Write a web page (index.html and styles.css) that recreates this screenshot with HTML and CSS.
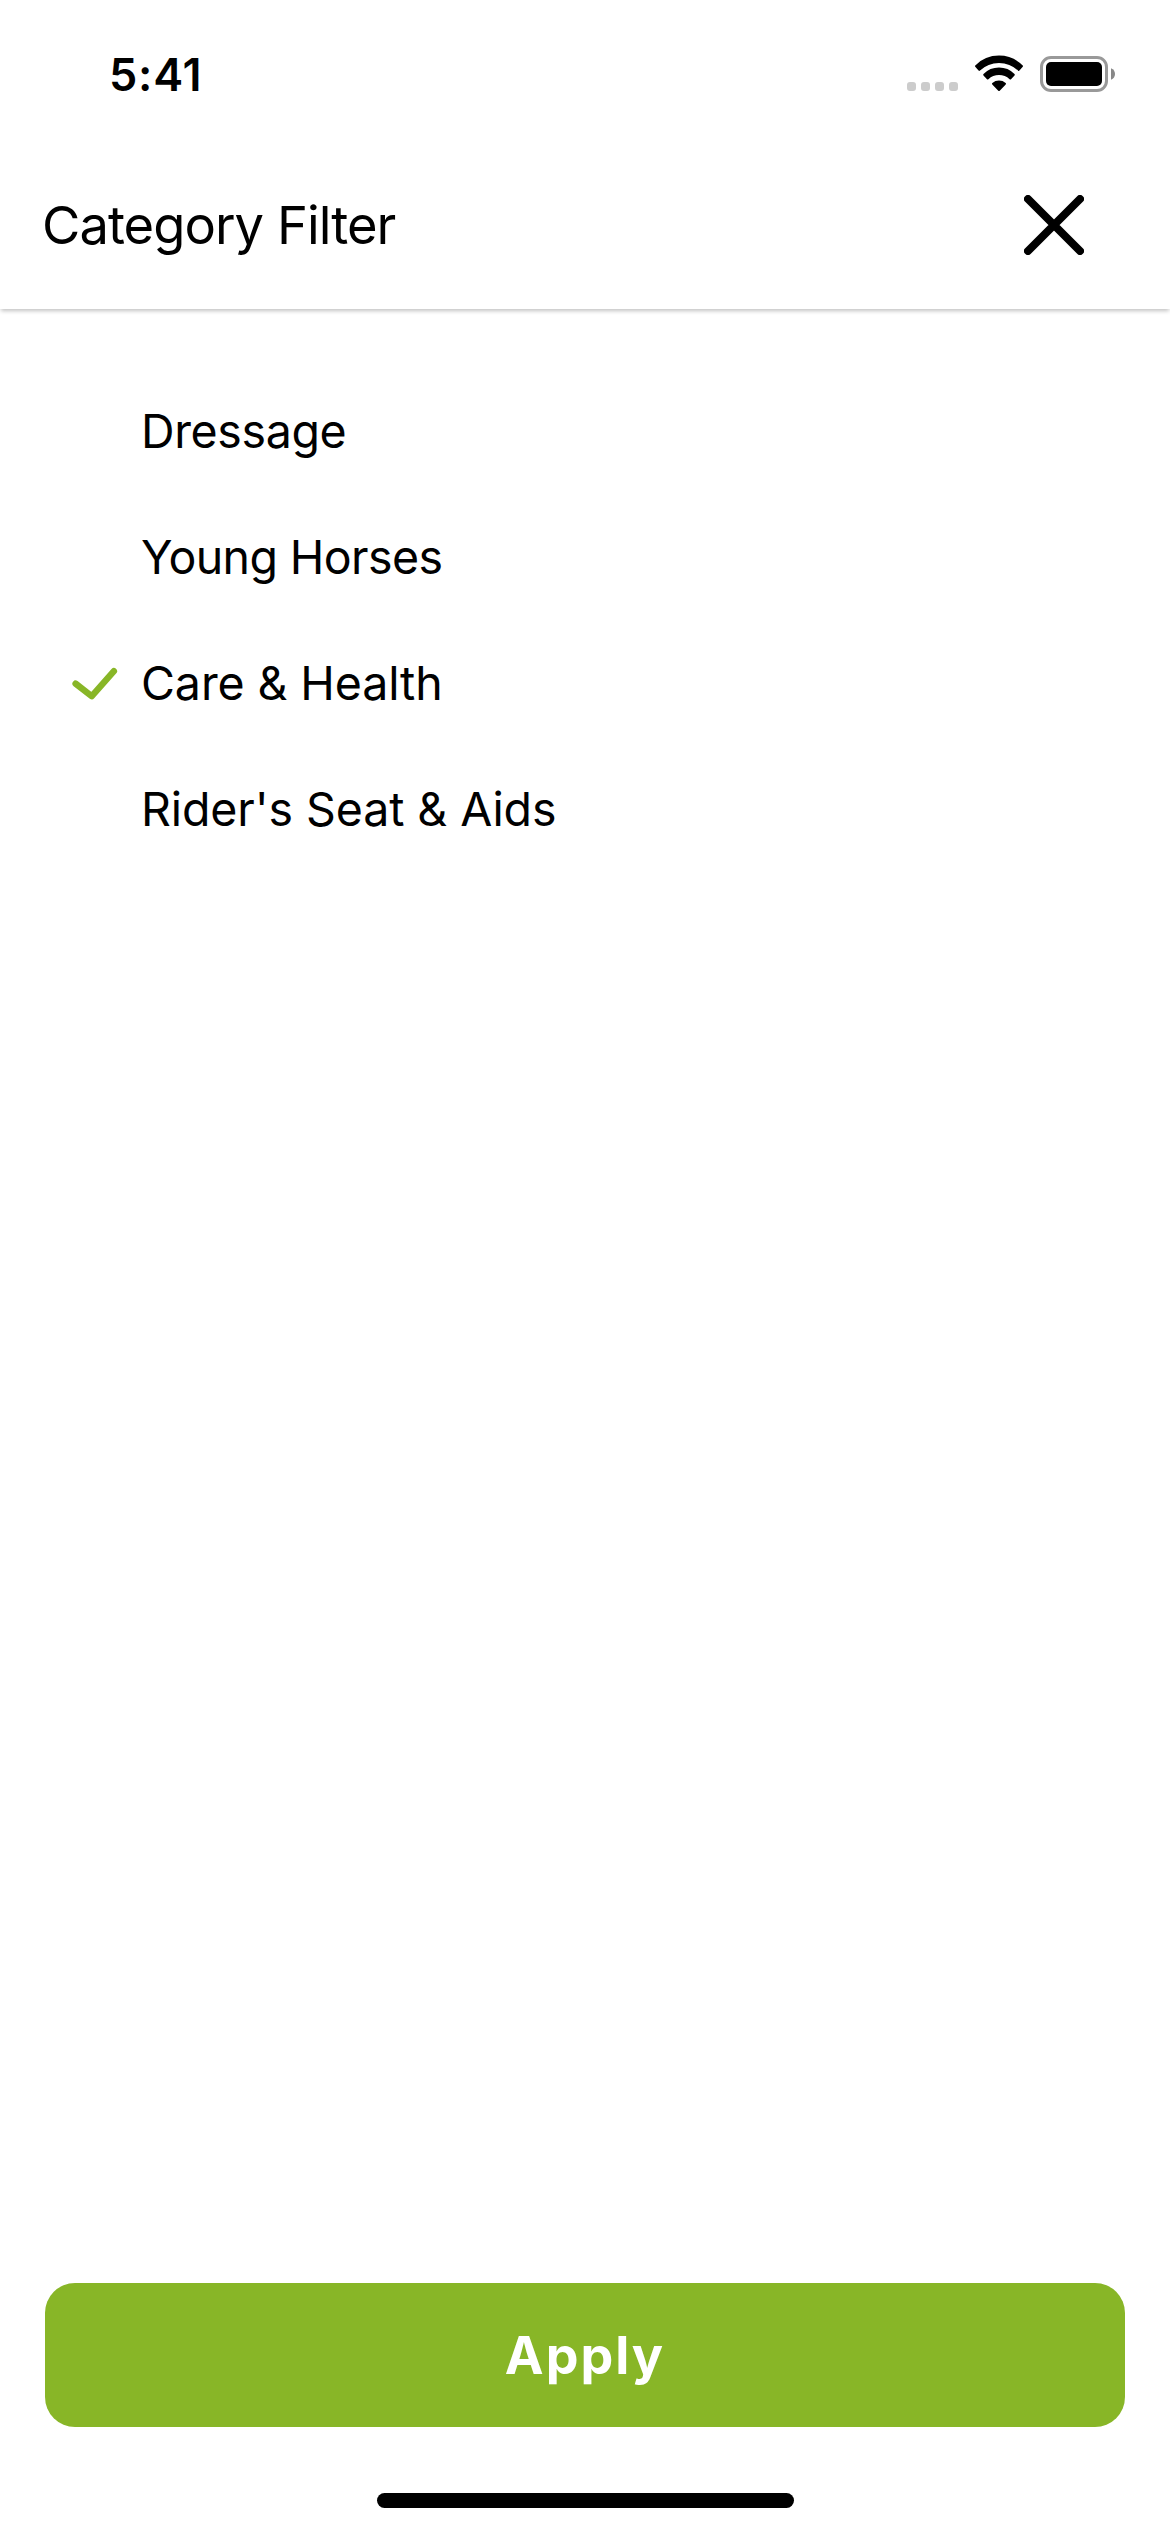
FILE: index.html
```html
<!DOCTYPE html>
<html lang="en">
<head>
<meta charset="utf-8">
<title>Category Filter</title>
<link rel="stylesheet" href="styles.css">
</head>
<body>
<div class="screen">
  <div class="status-bar">
    <time class="clock">5:41</time>
    <div class="indicators">
      <div class="signal"><i></i><i></i><i></i><i></i></div>
      <svg class="wifi" viewBox="0 0 50 38" width="50" height="38" aria-hidden="true">
        <g stroke="#000" stroke-width="2" stroke-linejoin="round">
          <path d="M2 11.1A32.6 32.6 0 0 1 48 11.1L44.7 14.9A28.6 28.6 0 0 0 5.3 14.9Z"/>
          <path d="M10.2 19.8A20.8 20.8 0 0 1 39.8 19.8L36.3 23.5A16.6 16.6 0 0 0 13.7 23.5Z"/>
          <path d="M19 28.7A9.2 9.2 0 0 1 31 28.7L25 35Z"/>
        </g>
      </svg>
      <svg class="battery" viewBox="0 0 76 36" width="76" height="36" aria-hidden="true">
        <rect x="1.5" y="1.5" width="65" height="33" rx="9.5" fill="none" stroke="#999" stroke-width="3"/>
        <rect x="6" y="6" width="56" height="24" rx="5"/>
        <path d="M71 12.2Q75 14 75 18T71 23.8Z" fill="#888"/>
      </svg>
    </div>
  </div>
  <header class="header">
    <h1 class="title">Category Filter</h1>
    <button class="close" aria-label="Close">
      <svg viewBox="0 0 60 60" width="60" height="60"><path d="M4 4L56 56M56 4L4 56" fill="none" stroke="#000" stroke-width="8" stroke-linecap="round"/></svg>
    </button>
  </header>
  <ul class="categories">
    <li class="category"><span class="mark"></span><span class="name name-dressage">Dressage</span></li>
    <li class="category"><span class="mark"></span><span class="name name-young">Young Horses</span></li>
    <li class="category">
      <span class="mark"><svg viewBox="0 0 46 36" width="46" height="36"><path d="M3.6 18.6L19.8 31.2L41.9 6.2" fill="none" stroke="#88b627" stroke-width="6.4" stroke-linecap="round" stroke-linejoin="round"/></svg></span>
      <span class="name">Care &amp; Health</span>
    </li>
    <li class="category"><span class="mark"></span><span class="name">Rider's Seat &amp; Aids</span></li>
  </ul>
  <footer class="footer">
    <button class="apply">Apply</button>
    <div class="home-indicator"></div>
  </footer>
</div>
</body>
</html>
```
FILE: styles.css
```css
* {
  box-sizing: border-box;
}

body {
  margin: 0;
  background: #fff;
  color: #000;
  font-family: Inter, "Liberation Sans", sans-serif;
}

button {
  border: 0;
  padding: 0;
  background: none;
  font-family: inherit;
}

.screen {
  display: flex;
  flex-direction: column;
  width: 1170px;
  height: 2532px;
}

.status-bar {
  display: flex;
  align-items: center;
  justify-content: space-between;
  height: 141px;
  padding: 0 54px 0 109px;
}

.clock {
  padding-top: 8px;
  font-size: 45px;
  font-weight: 600;
  line-height: 60px;
  letter-spacing: 0.77px;
}

.indicators {
  display: flex;
  align-items: center;
  gap: 16px;
  padding-top: 7px;
}

.signal {
  display: flex;
  gap: 5px;
  margin-top: 25px;
}

.signal i {
  width: 9px;
  height: 9px;
  border-radius: 3px;
  background: #ccc;
}

.header {
  display: flex;
  align-items: center;
  justify-content: space-between;
  height: 168px;
  padding: 0 86px 0 42px;
  background: #fff;
  box-shadow: 0 3px 4px -1px rgba(0, 0, 0, 0.24);
}

.title {
  margin: 0;
  font-size: 52.5px;
  font-weight: 400;
  line-height: 64px;
  letter-spacing: -0.97px;
}

.close,
.close svg {
  display: block;
}

.categories {
  flex: 1;
  margin: 0;
  padding: 59px 0 0 72px;
  list-style: none;
}

.category {
  display: flex;
  align-items: center;
  height: 126px;
}

.mark {
  width: 69px;
}

.mark svg {
  display: block;
}

.name {
  font-size: 46.5px;
  line-height: 56px;
  letter-spacing: -0.1px;
}

.name-dressage {
  letter-spacing: -0.37px;
}

.name-young {
  letter-spacing: -0.6px;
}

.footer {
  display: flex;
  flex-direction: column;
  align-items: center;
  height: 249px;
  padding: 0 45px;
}

.apply {
  width: 100%;
  height: 144px;
  border-radius: 30px;
  background: #88b627;
  color: #fff;
  font-size: 52px;
  font-weight: 700;
  letter-spacing: 2px;
}

.home-indicator {
  width: 417px;
  height: 15px;
  margin-top: 66px;
  border-radius: 8px;
  background: #000;
}
```
